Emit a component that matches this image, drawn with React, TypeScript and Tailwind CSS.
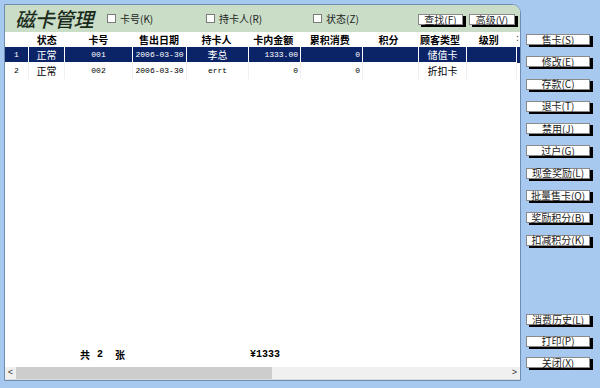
import React from "react";

const CJK = { fontFamily: '"Noto Sans CJK SC", "Liberation Sans", sans-serif' };
const MONO = { fontFamily: '"Liberation Mono", "Noto Sans CJK SC", monospace' };

const cols = [24, 36, 68, 54, 62, 52, 62, 56, 48, 50];
const headers = ["", "状态", "卡号", "售出日期", "持卡人", "卡内金额", "累积消费", "积分", "顾客类型", "级别"];

type Cell = { t: string; a: "l" | "c" | "r"; mono?: boolean };

const rows: Cell[][] = [
  [
    { t: "1", a: "c", mono: true },
    { t: "正常", a: "c" },
    { t: "001", a: "c", mono: true },
    { t: "2006-03-30", a: "c", mono: true },
    { t: "李总", a: "c" },
    { t: "1333.00", a: "r", mono: true },
    { t: "0", a: "r", mono: true },
    { t: "", a: "c" },
    { t: "储值卡", a: "c" },
    { t: "", a: "c" },
  ],
  [
    { t: "2", a: "c", mono: true },
    { t: "正常", a: "c" },
    { t: "002", a: "c", mono: true },
    { t: "2006-03-30", a: "c", mono: true },
    { t: "errt", a: "c", mono: true },
    { t: "0", a: "r", mono: true },
    { t: "0", a: "r", mono: true },
    { t: "", a: "c" },
    { t: "折扣卡", a: "c" },
    { t: "", a: "c" },
  ],
];

function Btn({ label, w = "w-[64px]" }: { label: string; w?: string }) {
  return (
    <div
      className={`${w} h-[11px] bg-white border border-[#8a8a8a] shadow-[3px_2px_0_#000] flex items-center justify-center text-[10px] leading-none text-[#222]`}
      style={CJK}
    >
      {label}
    </div>
  );
}

function Check({ label }: { label: string }) {
  return (
    <div className="flex items-center gap-[4px]">
      <div className="w-[9px] h-[9px] bg-white border border-[#7a7a7a]" />
      <span className="text-[10px] leading-none text-[#222]" style={CJK}>
        {label}
      </span>
    </div>
  );
}

export default function App() {
  return (
    <div className="w-[600px] h-[388px] bg-[#a7c9ef] flex overflow-hidden">
      {/* main panel */}
      <div className="ml-[4px] mt-[4px] w-[517px] h-[377px] border border-[#6f8db0] rounded-tr-[9px] bg-white flex flex-col overflow-hidden">
        {/* header */}
        <div className="h-[27px] shrink-0 bg-[#c9ddc7] flex items-center">
          <div className="w-[102px] pl-[10px] h-full flex items-center">
            <span
              className="text-[20px] leading-[24px] italic text-[#1b2b1b] tracking-[-0.5px] pr-[4px]"
              style={{ fontFamily: '"Noto Sans CJK SC", serif', fontWeight: 500 }}
            >
              磁卡管理
            </span>
          </div>
          <div className="w-[99px]">
            <Check label="卡号(K)" />
          </div>
          <div className="w-[107px]">
            <Check label="持卡人(R)" />
          </div>
          <div className="w-[105px]">
            <Check label="状态(Z)" />
          </div>
          <div className="flex gap-[6px] mt-[2px]">
            <Btn label="查找(F)" w="w-[45px]" />
            <Btn label="高级(V)" w="w-[46px]" />
          </div>
        </div>

        {/* table header */}
        <div className="h-[15px] shrink-0 flex items-center">
          {headers.map((h, i) => (
            <div
              key={i}
              className="h-full flex items-center justify-center text-[10px] font-bold leading-none text-black"
              style={{ width: cols[i], ...CJK }}
            >
              {h}
            </div>
          ))}
          <div className="flex-1 text-[9px] text-[#555] pl-[1px]" style={MONO}>:</div>
        </div>

        {/* rows */}
        {rows.map((r, ri) => (
          <div key={ri} className="h-[16px] shrink-0 flex">
            {r.map((c, ci) => (
              <div
                key={ci}
                className={`h-full flex items-center px-[2px] leading-none ${
                  c.a === "r" ? "justify-end" : c.a === "l" ? "justify-start" : "justify-center"
                } ${
                  ri === 0
                    ? "bg-[#0b2468] text-white border-r border-b border-white"
                    : "bg-white text-black border-r border-[#f0f0f0]"
                } ${c.mono ? "text-[8px]" : "text-[10px]"}`}
                style={{ width: cols[ci], ...(c.mono ? MONO : CJK) }}
              >
                {c.t}
              </div>
            ))}
            <div className={`flex-1 ${ri === 0 ? "bg-[#0b2468]" : ""}`} />
          </div>
        ))}

        <div className="flex-1" />

        {/* footer */}
        <div className="h-[16px] shrink-0 flex items-center text-[10px] font-bold leading-none text-black">
          <div className="ml-[75px] w-[170px] flex items-center gap-[7px]" style={CJK}>
            <span>共</span>
            <span style={MONO}>2</span>
            <span className="ml-[5px]">张</span>
          </div>
          <span style={MONO} className="text-[10px] font-bold">¥1333</span>
        </div>
        <div className="h-[4px] shrink-0" />

        {/* scrollbar */}
        <div className="h-[12px] shrink-0 flex">
          <div className="w-[11px] bg-[#f0f0f0] flex items-center justify-center text-[9px] text-[#333] leading-none" style={MONO}>
            &lt;
          </div>
          <div className="w-[256px] bg-[#cdcdcd]" />
          <div className="flex-1 bg-[#f0f0f0]" />
          <div className="w-[11px] bg-[#f0f0f0] flex items-center justify-center text-[9px] text-[#333] leading-none" style={MONO}>
            &gt;
          </div>
        </div>
        <div className="h-[1px] shrink-0 bg-[#d9dee6]" />
      </div>

      {/* right buttons */}
      <div className="ml-[5px] flex flex-col pt-[34px] pb-[20px]">
        <div className="flex flex-col gap-[11.3px]">
          {["售卡(S)", "修改(E)", "存款(C)", "退卡(T)", "禁用(J)", "过户(G)", "现金奖励(L)", "批量售卡(Q)", "奖励积分(B)", "扣减积分(K)"].map((l) => (
            <Btn key={l} label={l} />
          ))}
        </div>
        <div className="flex-1" />
        <div className="flex flex-col gap-[10.5px]">
          {["消费历史(L)", "打印(P)", "关闭(X)"].map((l) => (
            <Btn key={l} label={l} />
          ))}
        </div>
      </div>
    </div>
  );
}
